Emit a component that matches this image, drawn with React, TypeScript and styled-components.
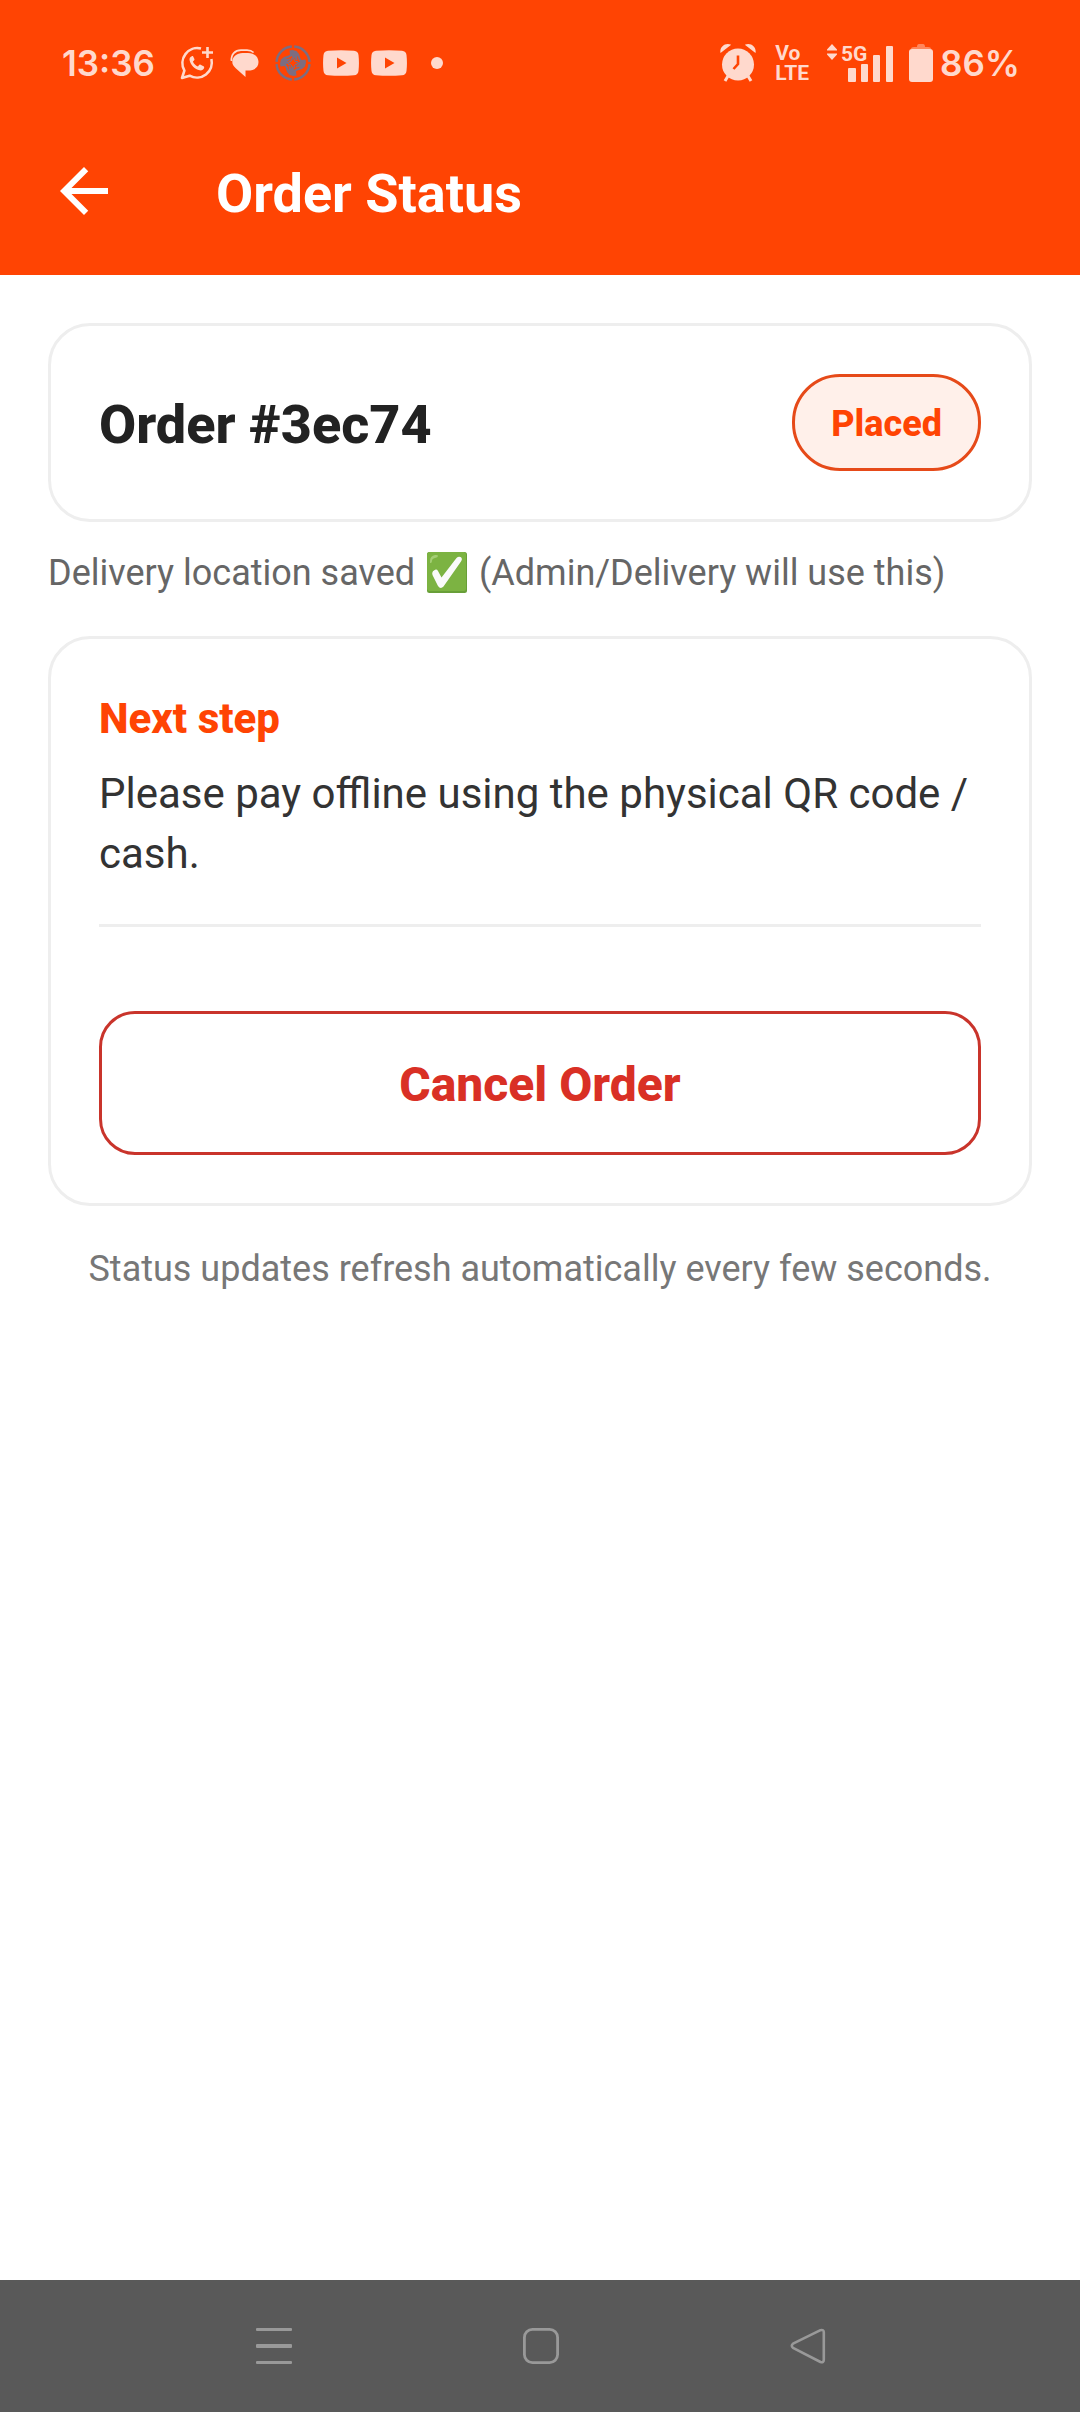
import React from "react";
import styled, { createGlobalStyle } from "styled-components";

const brand = "#ff4403";
const statusInk = "#ffd9cd";

const GlobalStyle = createGlobalStyle`
  *, *::before, *::after { box-sizing: border-box; }
  body { margin: 0; background: #ffffff; font-family: Roboto, "Liberation Sans", sans-serif; }
  h1, h2, p { margin: 0; }
  svg { display: block; flex: none; }
`;

const Screen = styled.div`
  display: flex;
  flex-direction: column;
  min-height: 100vh;
`;

const TopArea = styled.header`
  background: ${brand};
`;

const StatusBar = styled.div`
  display: flex;
  align-items: center;
  justify-content: space-between;
  height: 107px;
  padding: 18px 60px 0 62px;
  color: ${statusInk};
`;

const StatusGroup = styled.div<{ $gap: number }>`
  display: flex;
  align-items: center;
  gap: ${(p) => p.$gap}px;
`;

const StatusText = styled.span`
  font-family: Inter, "Liberation Sans", sans-serif;
  font-size: 35px;
  font-weight: 600;
  line-height: 48px;
`;

const NetworkLabel = styled.span`
  display: flex;
  flex-direction: column;
  font-size: 21px;
  font-weight: 700;
  line-height: 20px;
`;

const Signal = styled.div`
  display: grid;
`;

const SignalPart = styled.div`
  grid-area: 1 / 1;
`;

const Generation = styled.span`
  grid-area: 1 / 1;
  padding-left: 14px;
  font-size: 21px;
  font-weight: 700;
  line-height: 20px;
`;

const AppBar = styled.div`
  display: flex;
  align-items: center;
  gap: 96px;
  height: 168px;
  padding: 0 48px;
`;

const BackButton = styled.button`
  padding: 0;
  border: 0;
  background: none;
  color: #ffffff;
`;

const Title = styled.h1`
  padding-top: 5px;
  color: #ffffff;
  font-size: 54px;
  font-weight: 700;
  line-height: 64px;
`;

const Content = styled.main`
  display: flex;
  flex-direction: column;
  padding: 48px;
`;

const Card = styled.section`
  padding: 48px;
  border: 3px solid #eeeeee;
  border-radius: 42px;
`;

const OrderCard = styled(Card)`
  display: flex;
  align-items: center;
  justify-content: space-between;
`;

const OrderNumber = styled.h2`
  padding-top: 5px;
  color: #222222;
  font-size: 54px;
  font-weight: 800;
  line-height: 64px;
`;

const Badge = styled.span`
  padding: 26px 36px 22px;
  border: 3px solid #e64a19;
  border-radius: 48px;
  background: #fff0ea;
  color: ${brand};
  font-size: 36px;
  font-weight: 800;
  line-height: 43px;
`;

const Note = styled.p`
  padding: 30px 0 42px;
  color: #666666;
  font-size: 36px;
  line-height: 42px;
`;

const CheckMark = styled.svg`
  display: inline-block;
  margin: 0 3px;
  vertical-align: -8px;
`;

const StepTitle = styled.h2`
  padding-top: 2px;
  color: ${brand};
  font-size: 42px;
  font-weight: 800;
  line-height: 60px;
`;

const StepText = styled.p`
  padding-top: 15px;
  color: #333333;
  font-size: 42px;
  line-height: 60px;
`;

const Divider = styled.hr`
  height: 3px;
  margin: 40px 0 84px;
  border: 0;
  background: #eeeeee;
`;

const CancelButton = styled.button`
  display: block;
  width: 100%;
  padding: 43px 41px 39px;
  border: 3px solid #c9342b;
  border-radius: 36px;
  background: #ffffff;
  color: #d93025;
  font-family: inherit;
  font-size: 48px;
  font-weight: 800;
  line-height: 56px;
`;

const Footnote = styled.p`
  padding-top: 42px;
  color: #777777;
  font-size: 36px;
  line-height: 42px;
  text-align: center;
`;

const NavBar = styled.nav`
  display: flex;
  height: 132px;
  margin-top: auto;
  padding: 0 138px 0 140px;
  background: #595959;
`;

const NavButton = styled.button`
  display: flex;
  flex: 1;
  align-items: center;
  justify-content: center;
  padding: 0;
  border: 0;
  background: none;
  color: #999999;
`;

const WhatsAppIcon = () => (
  <svg width="34" height="34" viewBox="0 0 34 34" fill="none" stroke="currentColor">
    <path d="M21 2.6A15 15 0 0 0 4.4 24.6L2 32l7.6-2.3A15 15 0 0 0 31.4 13" strokeWidth="2.6" strokeLinejoin="round" />
    <path d="M27.5 1v11M22 6.5h11" strokeWidth="2.6" />
    <path
      d="M11.8 10.2c-1.8.6-2.6 2.200-2.200 4.100 1 4.800 5.200 9 10 10 2 .4 3.900-.5 4.500-2.400.2-.9.1-1.300-.6-1.700l-2.900-1.500c-.7-.3-1.200-.2-1.600.4l-1 1.300c-2.300-.9-4.200-2.700-5.100-5l1.100-1c.5-.4.6-.9.4-1.500l-1.200-2.300c-.3-.5-.8-.6-1.400-.4z"
      fill="currentColor"
      stroke="none"
    />
  </svg>
);

const MessageIcon = () => (
  <svg width="29" height="28" viewBox="0 0 29 28" fill="currentColor">
    <path d="M1.500 12C.8 5.500 5 1.200 11 1.200h6c3 0 5.200 1 6.600 2.300" fill="none" stroke="currentColor" strokeWidth="1.700" />
    <path d="M12.500 4H18c6 0 10.500 3.500 10.500 9s-4.500 8.500-10.500 8.500h-2.500V28L6 19.500C3.500 17.300 2.300 15.500 2.300 12.800 2.300 7.500 7 4 12.500 4z" />
  </svg>
);

const EmblemIcon = () => (
  <svg width="36" height="36" viewBox="0 0 36 36" fill="#7d6d80">
    {[0, 90, 180, 270].map((angle) => (
      <g key={angle} transform={`rotate(${angle} 18 18)`}>
        <path d="M19.200 1.500A16.500 16.500 0 0 1 34.500 16.800" fill="none" stroke="#7d6d80" strokeWidth="2.400" />
        <path d="M14.500 5.500l3-.5 4 1 2.500 3 1.500 4.500-1.500.5-2-3 .5 4-1.500.2-1.500-3-.5 2.500-1.500-.2-.5-3.500-4 2-1-1.200 3-2.300z" />
        <path d="M16.500 13v3M19.500 14v2" stroke="#7d6d80" strokeWidth="1" />
      </g>
    ))}
  </svg>
);

const VideoIcon = () => (
  <svg width="36" height="26" viewBox="0 0 36 26" fill="currentColor" fillRule="evenodd">
    <path d="M5 .7Q18-.4 31 .7q4 .3 4.500 4.300.9 8 0 16-.5 4-4.500 4.300-13 1.100-26 0Q1 25 .5 21q-.9-8 0-16Q1 1 5 .7zM14 7.500v11l9.500-5.500z" />
  </svg>
);

const DotIcon = () => (
  <svg width="12" height="12" viewBox="0 0 12 12" fill="currentColor">
    <circle cx="6" cy="6" r="6" />
  </svg>
);

const AlarmIcon = () => (
  <svg width="38" height="39" viewBox="0 0 38 39" fill="currentColor">
    <circle cx="19" cy="21.500" r="16" />
    <path d="M9 33l-3 5M29 33l3 5" stroke="currentColor" strokeWidth="3" />
    <path d="M1.500 10C.2 4 6.500-1.300 12.200 1.800zM36.500 10C37.800 4 31.500-1.300 25.800 1.800z" />
    <path d="M19 12.500V21l-4.500 5" fill="none" stroke={brand} strokeWidth="2.600" />
  </svg>
);

const DataArrowsIcon = () => (
  <svg width="10" height="16" viewBox="0 0 10 16" fill="currentColor">
    <path d="M5 0l5 5.500v1H0v-1zM5 16l5-5.500v-1H0v1z" />
  </svg>
);

const BarsIcon = () => (
  <svg width="66" height="38" viewBox="0 0 66 38" fill="currentColor">
    <rect x="21" y="24" width="8" height="14" rx="1" />
    <rect x="34" y="20" width="7" height="18" rx="1" />
    <rect x="46" y="11" width="7" height="27" rx="1" />
    <rect x="59" y="2" width="7" height="36" rx="1" />
  </svg>
);

const BatteryIcon = () => (
  <svg width="24" height="38" viewBox="0 0 24 38" fill="currentColor">
    <path d="M2 5q0-2 3-2h3q0-3 2-3h4q2 0 2 3h3q3 0 3 2z" opacity=".45" />
    <rect y="5" width="24" height="33" rx="3" />
  </svg>
);

const BackArrowIcon = () => (
  <svg width="72" height="72" viewBox="0 0 24 24" fill="currentColor">
    <path d="M20 11H7.830l5.590-5.590L12 4l-8 8 8 8 1.410-1.410L7.830 13H20v-2z" />
  </svg>
);

const SavedIcon = () => (
  <CheckMark width="40" height="41" viewBox="0 0 40 41" role="img" aria-label="saved">
    <rect width="40" height="41" rx="2.500" fill="#689f38" />
    <rect width="39" height="39" rx="2.500" fill="#7cb342" />
    <path d="M3 9q0-5 5-6 3-.5 3 1T8 6 5 9 3 11z" fill="#aed581" opacity=".8" />
    <path d="M7 18.500q2.500-2 4 .5l3.500 6.500L29.500 6q2-2 4-1 2.500 1.500.5 4.500L16.500 34.500q-3 3-5.500-.5L5.500 23q-1-3 1.500-4.500z" fill="#fafafa" />
  </CheckMark>
);

const RecentsIcon = () => (
  <svg width="36" height="36" viewBox="0 0 36 36" fill="currentColor">
    <rect width="36" height="3" rx="1" />
    <rect y="16" width="36" height="4" rx="1" />
    <rect y="33" width="36" height="3" rx="1" />
  </svg>
);

const HomeIcon = () => (
  <svg width="36" height="36" viewBox="0 0 36 36" fill="none" stroke="currentColor" strokeWidth="2.800">
    <rect x="1.400" y="1.400" width="33.200" height="33.200" rx="8" />
  </svg>
);

const NavBackIcon = () => (
  <svg width="36" height="36" viewBox="0 0 36 36" fill="none" stroke="currentColor" strokeWidth="2.600" strokeLinejoin="round">
    <path d="M30.500 2.200 3 15.700q-2.400 1.900 0 4.200L30.500 34q3.300 1 3.300-2.200V4.300q0-3-3.300-2.100z" />
  </svg>
);

export default function App() {
  return (
    <>
      <GlobalStyle />
      <Screen>
        <TopArea>
          <StatusBar>
            <StatusGroup $gap={25}>
              <StatusText>13:36</StatusText>
              <StatusGroup $gap={24}>
                <StatusGroup $gap={12}>
                  <StatusGroup $gap={16}>
                    <WhatsAppIcon />
                    <MessageIcon />
                    <EmblemIcon />
                  </StatusGroup>
                  <VideoIcon />
                  <VideoIcon />
                </StatusGroup>
                <DotIcon />
              </StatusGroup>
            </StatusGroup>
            <StatusGroup $gap={18}>
              <AlarmIcon />
              <NetworkLabel>
                <span>Vo</span>
                <span>LTE</span>
              </NetworkLabel>
              <StatusGroup $gap={16}>
                <Signal>
                  <SignalPart>
                    <DataArrowsIcon />
                  </SignalPart>
                  <Generation>5G</Generation>
                  <SignalPart>
                    <BarsIcon />
                  </SignalPart>
                </Signal>
                <StatusGroup $gap={7}>
                  <BatteryIcon />
                  <StatusText>86%</StatusText>
                </StatusGroup>
              </StatusGroup>
            </StatusGroup>
          </StatusBar>
          <AppBar>
            <BackButton type="button" aria-label="Back">
              <BackArrowIcon />
            </BackButton>
            <Title>Order Status</Title>
          </AppBar>
        </TopArea>

        <Content>
          <OrderCard>
            <OrderNumber>Order #3ec74</OrderNumber>
            <Badge>Placed</Badge>
          </OrderCard>
          <Note>
            Delivery location saved <SavedIcon /> (Admin/Delivery will use this)
          </Note>
          <Card>
            <StepTitle>Next step</StepTitle>
            <StepText>Please pay offline using the physical QR code / cash.</StepText>
            <Divider />
            <CancelButton type="button">Cancel Order</CancelButton>
          </Card>
          <Footnote>Status updates refresh automatically every few seconds.</Footnote>
        </Content>

        <NavBar>
          <NavButton type="button" aria-label="Recent apps">
            <RecentsIcon />
          </NavButton>
          <NavButton type="button" aria-label="Home">
            <HomeIcon />
          </NavButton>
          <NavButton type="button" aria-label="Back">
            <NavBackIcon />
          </NavButton>
        </NavBar>
      </Screen>
    </>
  );
}
